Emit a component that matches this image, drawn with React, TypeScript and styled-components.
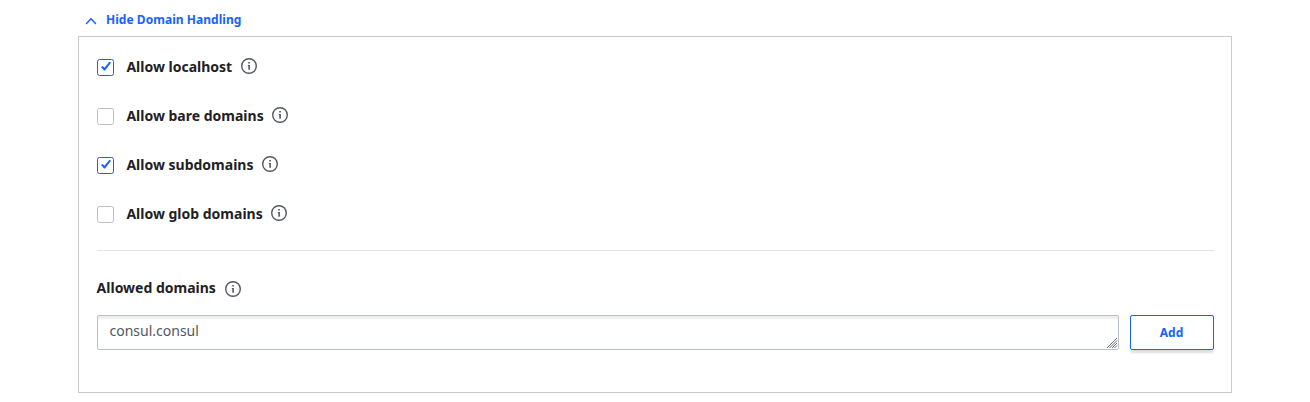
import React from "react";
import styled, { createGlobalStyle } from "styled-components";

const GlobalStyle = createGlobalStyle`
  *, *::before, *::after { box-sizing: border-box; }
  body {
    margin: 0;
    background: #fff;
    color: #1f2124;
    font-family: "Noto Sans", sans-serif;
    font-size: 14px;
  }
`;

const Page = styled.main`
  padding: 10px 78px 0;
`;

const Toggle = styled.button`
  display: flex;
  align-items: center;
  gap: 8px;
  height: 20px;
  margin: 0 0 6px;
  padding: 0 0 0 6px;
  border: 0;
  background: none;
  color: #1563ff;
  font: 700 12px/20px "Noto Sans", sans-serif;
  letter-spacing: 0.04px;
  cursor: pointer;

  svg { margin-top: 2px; }
`;

const Panel = styled.section`
  height: 357px;
  padding: 17px 17px 0 18px;
  border: 1px solid #c9cacd;
`;

const OptionRow = styled.div`
  display: flex;
  align-items: center;
  height: 25px;
  margin-bottom: 24px;
`;

const Box = styled.span<{ $checked: boolean }>`
  display: flex;
  width: 17px;
  height: 17px;
  margin: 2px 12.4px 0 0;
  border: 1px solid ${(p) => (p.$checked ? "#1563ff" : "#bac1cc")};
  border-radius: 2.5px;
`;

const Label = styled.span`
  font-weight: 700;
  line-height: 20px;
`;

const InfoSvg = styled.svg<{ $offset: number }>`
  display: block;
  margin: ${(p) => p.$offset}px 0 0 8.6px;
`;

const Divider = styled.hr`
  height: 1px;
  margin: 0;
  border: 0;
  background: #e1e3e6;
`;

const FieldHeading = styled.div`
  display: flex;
  align-items: center;
  gap: 0.6px;
  height: 24px;
  margin: 25px 0 15px -0.4px;
`;

const FieldRow = styled.div`
  display: flex;
  gap: 11px;
`;

const InputWrap = styled.div`
  position: relative;
  flex: 1;
`;

const DomainInput = styled.textarea`
  display: block;
  width: 100%;
  height: 35px;
  margin: 0;
  padding: 4px 12px 4px 11.5px;
  border: 1px solid #bac1cc;
  border-radius: 2px;
  outline: 0;
  overflow: hidden;
  resize: none;
  background: #fff;
  box-shadow: inset 0 4px 2px -1px rgba(10, 10, 10, 0.07);
  color: #525761;
  font: 400 14px/21px "Noto Sans", sans-serif;
`;

const GripSvg = styled.svg`
  position: absolute;
  right: 1px;
  bottom: 1px;
`;

const AddButton = styled.button`
  width: 84px;
  height: 35px;
  padding: 0 1px 0 0;
  border: 1px solid #1563ff;
  border-radius: 2px;
  background: #fff;
  box-shadow: 0 4px 2px -1px rgba(10, 10, 10, 0.13);
  color: #1563ff;
  font: 700 12px/20px "Noto Sans", sans-serif;
  cursor: pointer;
`;

const ChevronUp = () => (
  <svg width="14" height="14" viewBox="0 0 14 14" fill="none" stroke="#1563ff" strokeWidth="1.5" strokeLinecap="round" strokeLinejoin="round">
    <path d="M2.5 9.5 7 4.7l4.5 4.8" />
  </svg>
);

const CheckMark = () => (
  <svg width="15" height="15" viewBox="0 0 15 15" fill="#1563ff">
    <path d="M3 7 4.6 5.9 6.5 7.8 11.4 1.8l1.6 1L7.1 10.4H6Z" />
  </svg>
);

const Info = ({ offset = -2 }: { offset?: number }) => (
  <InfoSvg $offset={offset} width="16" height="16" viewBox="0 0 16 16" fill="#525761">
    <circle cx="8" cy="8" r="7.3" fill="none" stroke="#525761" strokeWidth="1.4" />
    <rect x="7.2" y="4" width="1.7" height="1.6" rx="0.3" />
    <path d="M6.8 6.9h2.1v4.9H7.3V7.9h-.5Z" />
  </InfoSvg>
);

const ResizeGrip = () => (
  <GripSvg width="12" height="12" viewBox="0 0 12 12" fill="none" stroke="#686a6e" strokeWidth="1" aria-hidden="true">
    <path d="M1 11 11 1M3.5 11 11 3.5M6 11l5-5M8.5 11 11 8.5" />
  </GripSvg>
);

const options = [
  { label: "Allow localhost", checked: true },
  { label: "Allow bare domains", checked: false },
  { label: "Allow subdomains", checked: true },
  { label: "Allow glob domains", checked: false },
];

export default function App() {
  return (
    <>
      <GlobalStyle />
      <Page>
        <Toggle type="button" aria-expanded="true">
          <ChevronUp />
          Hide Domain Handling
        </Toggle>
        <Panel>
          {options.map(({ label, checked }) => (
            <OptionRow key={label}>
              <Box role="checkbox" aria-checked={checked} aria-label={label} $checked={checked}>
                {checked && <CheckMark />}
              </Box>
              <Label>{label}</Label>
              <Info />
            </OptionRow>
          ))}
          <Divider />
          <FieldHeading>
            <Label>Allowed domains</Label>
            <Info offset={2} />
          </FieldHeading>
          <FieldRow>
            <InputWrap>
              <DomainInput aria-label="Allowed domains" defaultValue="consul.consul" spellCheck={false} />
              <ResizeGrip />
            </InputWrap>
            <AddButton type="button">Add</AddButton>
          </FieldRow>
        </Panel>
      </Page>
    </>
  );
}
